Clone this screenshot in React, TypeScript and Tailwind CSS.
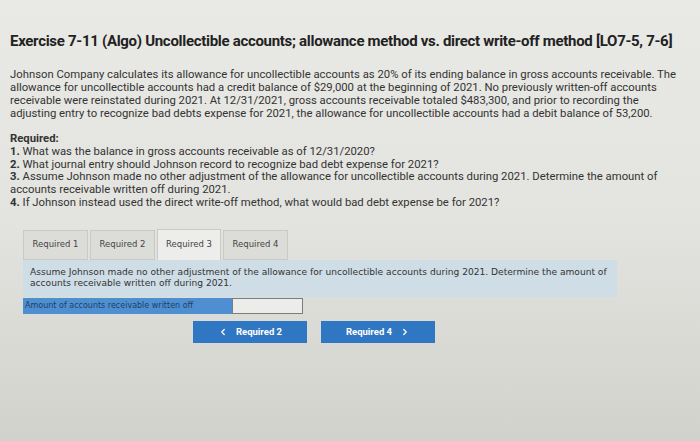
import React from "react";
import { ChevronLeft, ChevronRight } from "lucide-react";

const tabs = ["Required 1", "Required 2", "Required 3", "Required 4"];

export default function App() {
  return (
    <div
      className="w-[700px] h-[441px] overflow-hidden bg-gradient-to-b from-[#e9e9e5] via-[#e3e3df] to-[#d2d2cd] text-[#2a2a2a]"
      style={{ fontFamily: "Roboto, 'Liberation Sans', sans-serif" }}
    >
      <div className="pl-[10px] pt-[31px]">
        <h1 className="text-[15px] font-bold leading-[20px] tracking-[-0.3px] text-[#222] whitespace-nowrap">
          Exercise 7-11 (Algo) Uncollectible accounts; allowance method vs. direct write-off method [LO7-5, 7-6]
        </h1>
        <p className="mt-[17px] text-[11.3px] leading-[13px] text-[#333] whitespace-nowrap">
          Johnson Company calculates its allowance for uncollectible accounts as 20% of its ending balance in gross accounts receivable. The
          <br />
          allowance for uncollectible accounts had a credit balance of $29,000 at the beginning of 2021. No previously written-off accounts
          <br />
          receivable were reinstated during 2021. At 12/31/2021, gross accounts receivable totaled $483,300, and prior to recording the
          <br />
          adjusting entry to recognize bad debts expense for 2021, the allowance for uncollectible accounts had a debit balance of 53,200.
        </p>
        <div className="mt-[13px] text-[11.3px] leading-[12.8px] text-[#333] whitespace-nowrap">
          <div className="font-bold">Required:</div>
          <div>
            <span className="font-bold">1.</span> What was the balance in gross accounts receivable as of 12/31/2020?
          </div>
          <div>
            <span className="font-bold">2.</span> What journal entry should Johnson record to recognize bad debt expense for 2021?
          </div>
          <div>
            <span className="font-bold">3.</span> Assume Johnson made no other adjustment of the allowance for uncollectible accounts during 2021. Determine the amount of
          </div>
          <div>accounts receivable written off during 2021.</div>
          <div>
            <span className="font-bold">4.</span> If Johnson instead used the direct write-off method, what would bad debt expense be for 2021?
          </div>
        </div>
      </div>

      <div
        className="ml-[23px] mt-[19px] w-[594px]"
        style={{ fontFamily: "'DejaVu Sans', Verdana, sans-serif" }}
      >
        <div className="flex gap-[2px] items-end">
          {tabs.map((t, i) => (
            <div
              key={t}
              className={
                i === 2
                  ? "w-[64px] h-[31px] flex items-center justify-center text-[8.5px] text-[#444] bg-[#ededeb] border border-b-0 border-[#c9c9c6]"
                  : "w-[65px] h-[30px] flex items-center justify-center text-[8.5px] text-[#444] bg-[#dcdcd9] border border-[#c9c9c6]"
              }
            >
              {t}
            </div>
          ))}
        </div>
        <div className="bg-[#cfdde6] px-[7px] pt-[7px] pb-[8px] text-[9.1px] leading-[11px] text-[#333] whitespace-nowrap">
          Assume Johnson made no other adjustment of the allowance for uncollectible accounts during 2021. Determine the amount of
          <br />
          accounts receivable written off during 2021.
        </div>
        <div className="mt-[1px] flex h-[16px]">
          <div className="w-[209px] bg-[#4e8fd2] text-[8px] leading-[16px] pl-[2px] text-[#1f3f63] whitespace-nowrap">
            Amount of accounts receivable written off
          </div>
          <div className="w-[71px] bg-[#ececea] border border-[#7c7c7c]" />
        </div>
      </div>

      <div
        className="mt-[7px] ml-[193px] flex gap-[14px]"
        style={{ fontFamily: "Roboto, 'Liberation Sans', sans-serif" }}
      >
        <div className="w-[114px] h-[22px] bg-[#2f77c2] text-white text-[9.5px] font-bold flex items-center justify-center gap-[8px]">
          <ChevronLeft size={10} strokeWidth={3} />
          <span>Required 2</span>
        </div>
        <div className="w-[114px] h-[22px] bg-[#2f77c2] text-white text-[9.5px] font-bold flex items-center justify-center gap-[8px]">
          <span>Required 4</span>
          <ChevronRight size={10} strokeWidth={3} />
        </div>
      </div>
    </div>
  );
}
